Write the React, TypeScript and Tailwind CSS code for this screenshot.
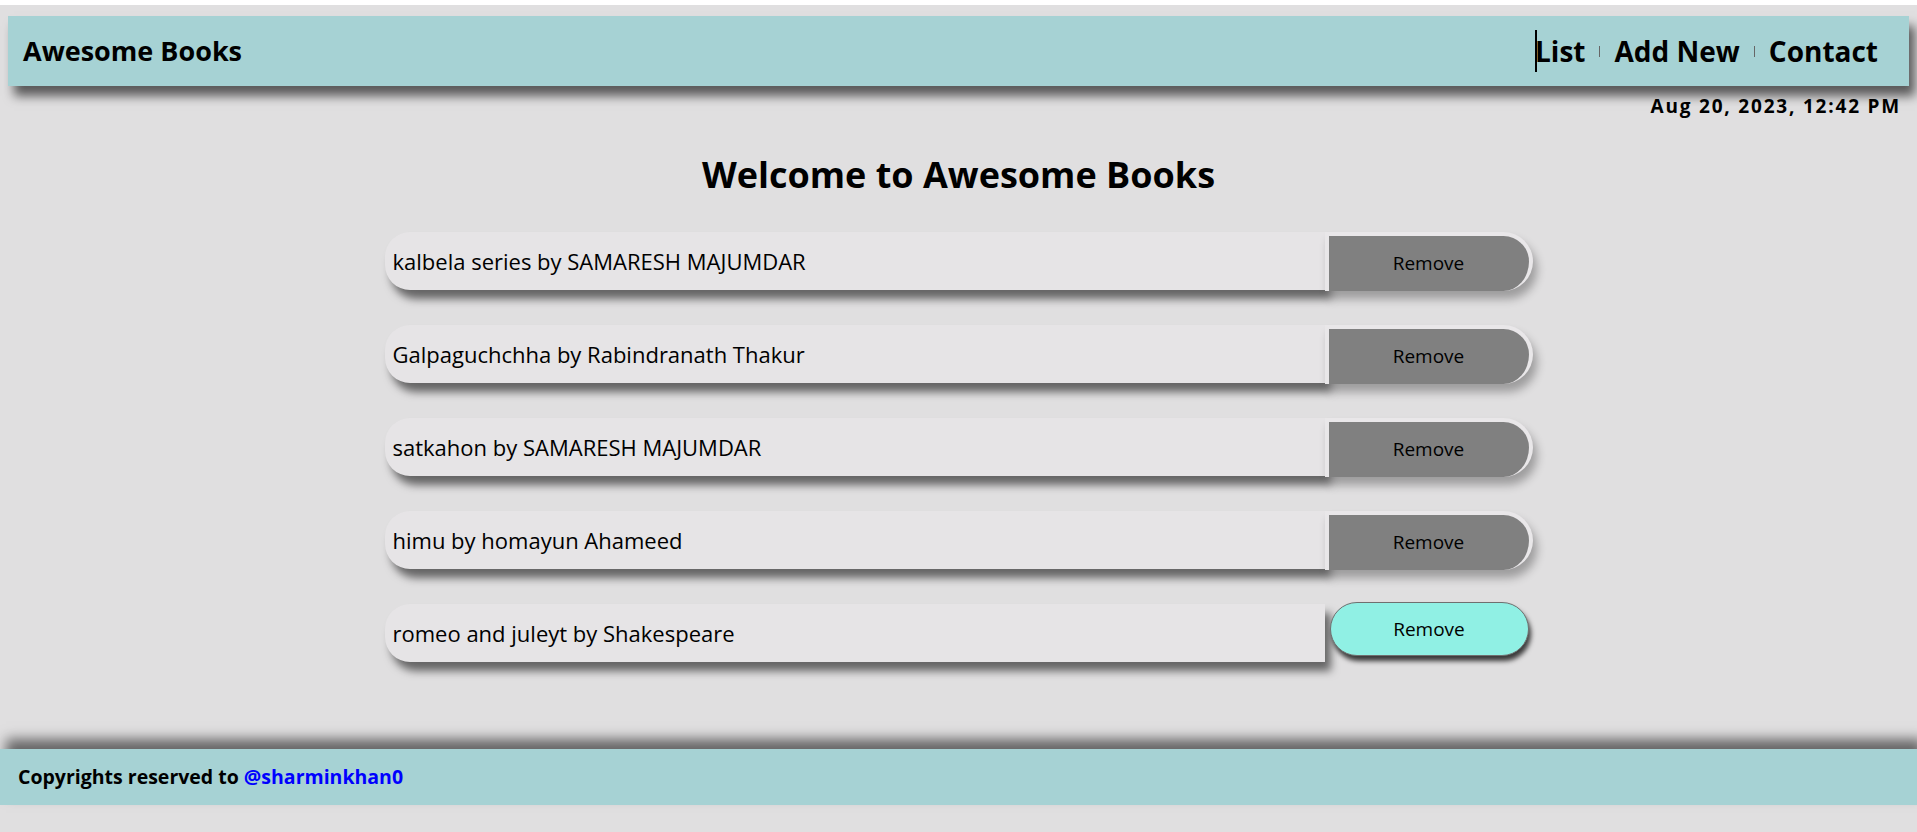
const books = [
  { title: "kalbela series", author: "SAMARESH MAJUMDAR" },
  { title: "Galpaguchchha", author: "Rabindranath Thakur" },
  { title: "satkahon", author: "SAMARESH MAJUMDAR" },
  { title: "himu", author: "homayun Ahameed" },
  { title: "romeo and juleyt", author: "Shakespeare" },
];

const font = "font-['Comic_Sans_MS','Open_Sans',sans-serif]";

const App = () => {
  return (
    <div
      className={`min-h-[832px] bg-[#e0dfe0] border-t-[5px] border-white text-black ${font}`}
    >
      <header className="mx-2 mt-[11px] h-[70px] flex items-center justify-between pl-[15px] pr-[31px] bg-[#a6d2d4] shadow-[6px_10px_10px_rgba(0,0,0,0.6)]">
        <h1 className="text-[27px] font-bold">Awesome Books</h1>
        <nav className="flex items-center text-[28px] font-bold">
          <span className="w-[2px] h-[42px] bg-black -mr-[2px]" />
          <a href="#list">List</a>
          <span className="mx-[14px] w-px h-[11px] bg-[#666]" />
          <a href="#add">Add New</a>
          <span className="mx-[14px] w-px h-[11px] bg-[#666]" />
          <a href="#contact">Contact</a>
        </nav>
      </header>

      <p className="mt-[8px] pr-4 text-right text-[19px] leading-[24px] tracking-[1.8px] font-bold">
        Aug 20, 2023, 12:42 PM
      </p>

      <main className="mt-[33px]">
        <h2 className="text-center text-[36px] leading-[48px] font-bold">
          Welcome to Awesome Books
        </h2>

        <ul className="w-[1148px] mx-auto mt-[33px] flex flex-col gap-[35px]">
          {books.map((book, index) => {
            const last = index === books.length - 1;
            return (
              <li key={index} className="flex h-[58px]">
                <p className="flex-1 flex items-center pl-[8px] text-[22px] bg-[#e6e4e6] rounded-l-[25px] shadow-[6px_9px_9px_rgba(0,0,0,0.55)]">
                  {book.title} by {book.author}
                </p>
                {last ? (
                  <div className="w-[208px] pl-[5px] pr-[4px]">
                    <button className="w-full h-[54px] -mt-[2px] rounded-full border border-[#6f6f6f] bg-[#90f0e4] text-[19px] shadow-[2px_5px_5px_rgba(0,0,0,0.75)]">
                      Remove
                    </button>
                  </div>
                ) : (
                  <button className="w-[208px] h-[59px] border-[4px] border-b-0 border-[#e9e7e9] rounded-r-[32px] bg-[#808080] text-[19px] shadow-[4px_8px_10px_rgba(0,0,0,0.3)]">
                    Remove
                  </button>
                )}
              </li>
            );
          })}
        </ul>
      </main>

      <footer className="mt-[87px] h-[56px] flex items-center pl-[18px] bg-[#a6d2d4] shadow-[6px_-10px_12px_rgba(0,0,0,0.55)] text-[19.5px] font-bold">
        Copyrights reserved to&nbsp;
        <a href="#" className="text-[#0000ff]">
          @sharminkhan0
        </a>
      </footer>
    </div>
  );
};

export default App;
